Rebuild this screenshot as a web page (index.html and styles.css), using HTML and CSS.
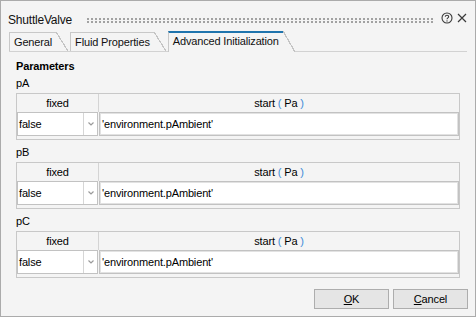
FILE: index.html
```html
<!DOCTYPE html>
<html lang="en">
<head>
  <meta charset="UTF-8" />
  <title>ShuttleValve</title>
  <link rel="stylesheet" href="styles.css">
</head>
<body>
  <div class="window">

    <!-- title bar -->
    <div class="titlebar">
      <span class="title">ShuttleValve</span>
      <svg class="grip" height="5">
        <defs>
          <pattern id="gripDots" width="4" height="3" patternUnits="userSpaceOnUse">
            <rect width="2" height="2" fill="#a2a2a2" />
          </pattern>
        </defs>
        <rect width="100%" height="100%" fill="url(#gripDots)" />
      </svg>
      <svg class="help" width="12" height="12" viewBox="0 0 12 12">
        <circle cx="6" cy="6" r="5" fill="none" stroke="#3a3a3a" stroke-width="1.1" />
        <path d="M4.3 4.8C4.3 3.8 5 3.2 6 3.2C7 3.2 7.7 3.8 7.7 4.7C7.7 5.8 6 5.9 6 7.2" fill="none" stroke="#3a3a3a" stroke-width="1.1" />
        <circle cx="6" cy="8.9" r="0.7" fill="#3a3a3a" />
      </svg>
      <svg class="close" width="10" height="10" viewBox="0 0 10 10">
        <path d="M1 1L9 9M9 1L1 9" stroke="#3a3a3a" stroke-width="1.2" />
      </svg>
    </div>

    <!-- tabs -->
    <div class="tabs">
      <div class="tab">General</div>
      <div class="tab">Fluid Properties</div>
      <div class="tab active">Advanced Initialization</div>
    </div>

    <!-- page -->
    <div class="page">
      <div class="heading">Parameters</div>

      <div class="group">
        <div class="group-name">pA</div>
        <div class="grid">
          <div class="grid-head">
            <div class="col-fixed">fixed</div>
            <div class="col-start">start <span class="paren">(</span> Pa <span class="paren">)</span></div>
          </div>
          <div class="grid-row">
            <div class="combo">
              <span class="combo-value">false</span>
              <span class="combo-arrow"><svg width="6" height="4" viewBox="0 0 6 4"><path d="M0.5 0.5L3 3L5.5 0.5" fill="none" stroke="#9a9a9a" stroke-width="1.2" /></svg></span>
            </div>
            <div class="cell-input">'environment.pAmbient'</div>
          </div>
        </div>
      </div>

      <div class="group">
        <div class="group-name">pB</div>
        <div class="grid">
          <div class="grid-head">
            <div class="col-fixed">fixed</div>
            <div class="col-start">start <span class="paren">(</span> Pa <span class="paren">)</span></div>
          </div>
          <div class="grid-row">
            <div class="combo">
              <span class="combo-value">false</span>
              <span class="combo-arrow"><svg width="6" height="4" viewBox="0 0 6 4"><path d="M0.5 0.5L3 3L5.5 0.5" fill="none" stroke="#9a9a9a" stroke-width="1.2" /></svg></span>
            </div>
            <div class="cell-input">'environment.pAmbient'</div>
          </div>
        </div>
      </div>

      <div class="group">
        <div class="group-name">pC</div>
        <div class="grid">
          <div class="grid-head">
            <div class="col-fixed">fixed</div>
            <div class="col-start">start <span class="paren">(</span> Pa <span class="paren">)</span></div>
          </div>
          <div class="grid-row">
            <div class="combo">
              <span class="combo-value">false</span>
              <span class="combo-arrow"><svg width="6" height="4" viewBox="0 0 6 4"><path d="M0.5 0.5L3 3L5.5 0.5" fill="none" stroke="#9a9a9a" stroke-width="1.2" /></svg></span>
            </div>
            <div class="cell-input">'environment.pAmbient'</div>
          </div>
        </div>
      </div>
    </div>

    <!-- buttons -->
    <div class="footer">
      <button><span class="key">O</span>K</button>
      <button><span class="key">C</span>ancel</button>
    </div>
  </div>
</body>
</html>
```

FILE: styles.css
```css
body {
  margin: 0;
  font-family: "Liberation Sans", Arial, sans-serif;
  font-size: 11px;
  letter-spacing: -0.15px;
  color: #000;
}

.window {
  box-sizing: border-box;
  width: 476px;
  height: 317px;
  border: 1px solid #ababab;
  background: #f4f4f4;
  display: flex;
  flex-direction: column;
}

/* title bar */
.titlebar {
  box-sizing: border-box;
  height: 30px;
  display: flex;
  align-items: flex-start;
  padding: 10px 8px 0 7px;
}
.title {
  font-size: 12px;
  letter-spacing: -0.2px;
  line-height: 16px;
  padding-top: 1px;
  color: #111;
}
.grip {
  flex: 1;
  margin: 7px 7px 0 15px;
}
.help {
  margin-top: 1px;
}
.close {
  margin: 2px 0 0 4px;
}

/* tabs */
.tabs {
  display: flex;
  align-items: flex-end;
  height: 20px;
  margin: 0 8px;
  border-bottom: 1px solid #d2d2d2;
}
.tab {
  position: relative;
  height: 17px;
  line-height: 17px;
  padding: 1px 4px 0;
  margin-right: 14px;
  border-top: 1px solid #c8c8c8;
  border-left: 1px solid #c8c8c8;
  color: #111;
}
.tab::after {
  content: '';
  position: absolute;
  left: 100%;
  top: -1px;
  bottom: 0;
  width: 12px;
  background: linear-gradient(to top right, transparent calc(50% - 0.6px), #c4c4c4 calc(50% - 0.6px), #c4c4c4 calc(50% + 0.6px), transparent calc(50% + 0.6px));
}
.tab.active {
  height: 19px;
  padding-top: 0;
  line-height: 17px;
  margin-bottom: -1px;
  background: #f4f4f4;
  border-top: 2px solid #1f74ad;
}
.tab.active::after {
  top: -2px;
  background: linear-gradient(to top right, #f4f4f4 calc(50% - 0.6px), #c4c4c4 calc(50% - 0.6px), #c4c4c4 calc(50% + 0.6px), transparent calc(50% + 0.6px));
}

/* page content */
.page {
  padding: 7px 15px 0;
}
.heading {
  font-weight: bold;
  line-height: 14px;
}
.group-name {
  line-height: 14px;
  margin: 3px 0;
}
.group + .group {
  margin-top: 5px;
}

.grid {
  border: 1px solid #c8c8c8;
  padding-bottom: 3px;
}
.grid-head {
  display: flex;
  height: 18px;
  line-height: 18px;
}
.col-fixed {
  width: 81px;
  border-right: 1px solid #d4d4d4;
  text-align: center;
}
.col-start {
  flex: 1;
  text-align: center;
}
.paren {
  color: #3c8ad8;
}

.grid-row {
  display: flex;
  gap: 1px;
  height: 24px;
}
.combo {
  box-sizing: border-box;
  width: 81px;
  display: flex;
  border: 1px solid #c2c2c2;
  background: #fff;
}
.combo-value {
  flex: 1;
  padding: 1px 0 0 1px;
  line-height: 21px;
  border-right: 1px solid #d6d6d6;
}
.combo-arrow {
  width: 13px;
  display: flex;
  align-items: center;
  justify-content: center;
}
.cell-input {
  box-sizing: border-box;
  flex: 1;
  padding: 1px 0 0 2px;
  line-height: 20px;
  border: 1px solid #c2c2c2;
  box-shadow: inset 0 0 0 1px #e2e2e2;
  background: #fff;
}

/* buttons */
.footer {
  margin-top: auto;
  display: flex;
  justify-content: flex-end;
  gap: 4px;
  padding: 0 7px 7px 0;
}
button {
  box-sizing: border-box;
  width: 75px;
  height: 20px;
  padding: 0;
  border: 1px solid #adadad;
  background: #e5e5e5;
  font: inherit;
  letter-spacing: inherit;
  color: #000;
}
.key {
  text-decoration: underline;
}
```
